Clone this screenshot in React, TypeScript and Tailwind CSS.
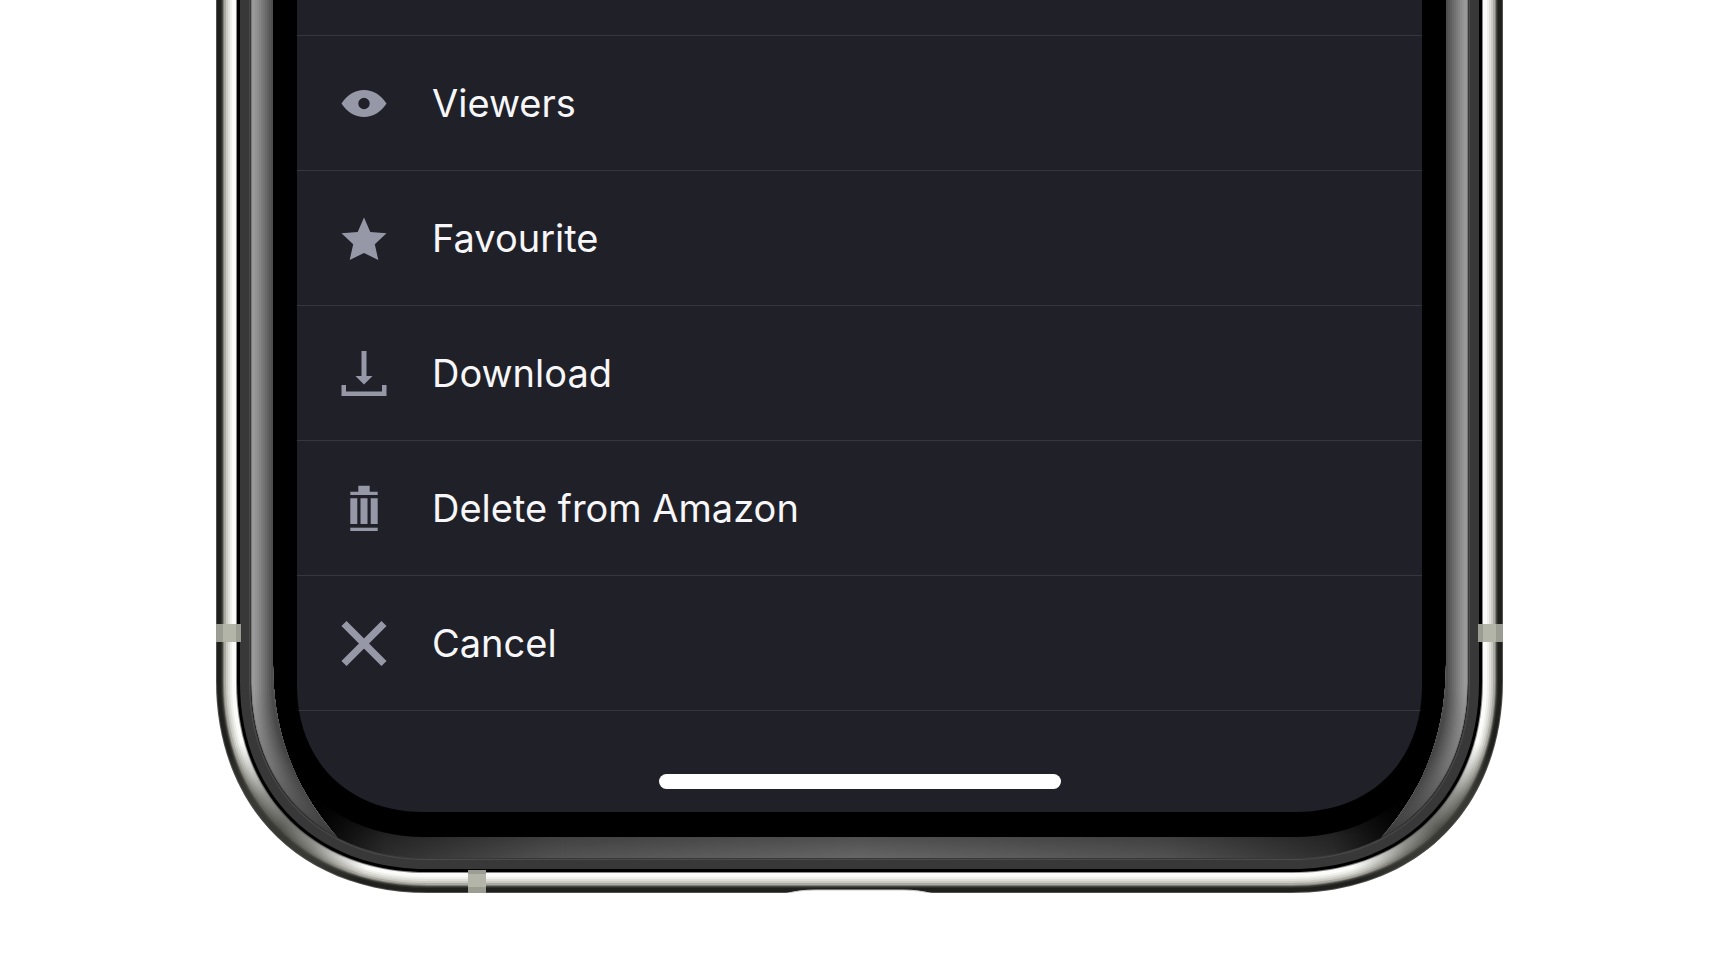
import type { ReactNode } from "react";

type MenuItem = {
    label: string;
    icon: ReactNode;
};

type Band = {
    inset: number;
    color: string;
};

const WIDTH = 1287;
const HEIGHT = 893;

const EyeIcon = () => (
    <svg viewBox="0 0 46 46" className="size-[46px] shrink-0" fill="currentColor" aria-hidden="true">
        <path
            fillRule="evenodd"
            d="M0.500 23.500C6 15 14 10 23 10S40 15 45.500 23.500C40 32 32 37 23 37S6 32 0.500 23.500ZM23 17.800a5.700 5.700 0 1 0 0 11.400a5.700 5.700 0 1 0 0-11.400Z"
        />
    </svg>
);

const StarIcon = () => (
    <svg viewBox="0 0 46 46" className="size-[46px] shrink-0" fill="currentColor" aria-hidden="true">
        <path d="M23 2.500L29.300 17L45.500 18.200L33.800 29.200L37.300 45L23 38L8.700 45L12.200 29.200L0.500 18.200L16.700 17Z" />
    </svg>
);

const DownloadIcon = () => (
    <svg viewBox="0 0 46 46" className="size-[46px] shrink-0" fill="currentColor" aria-hidden="true">
        <path d="M20.500 1h5v25h6L23 34.500L14.500 26h6Z" />
        <path d="M0.500 35h4.500v6.500h36V35h4.500v11h-45Z" />
    </svg>
);

const TrashIcon = () => (
    <svg viewBox="0 0 46 46" className="size-[46px] shrink-0" fill="currentColor" aria-hidden="true">
        <path d="M17.300 0.700h11.400v6h8v3.300H9.300V6.700h8Z" />
        <path d="M9.300 13.300h7V39h-7ZM19.500 13.300h7V39h-7ZM29.700 13.300h7V39h-7Z" />
        <path d="M9.300 42.700h27.400V46H9.300Z" />
    </svg>
);

const CloseIcon = () => (
    <svg viewBox="0 0 46 46" className="size-[46px] shrink-0" fill="none" stroke="currentColor" strokeWidth="7.200" aria-hidden="true">
        <path d="M3 3.500L43 43.500M43 3.500L3 43.500" />
    </svg>
);

const items: MenuItem[] = [
    { label: "Viewers", icon: <EyeIcon /> },
    { label: "Favourite", icon: <StarIcon /> },
    { label: "Download", icon: <DownloadIcon /> },
    { label: "Delete from Amazon", icon: <TrashIcon /> },
    { label: "Cancel", icon: <CloseIcon /> }
];

// U-shaped outline of the case, moved inwards by d
const outline = (d: number) => {
    const l = 212 - d * 1.06;
    const h = l * 0.404;
    const right = WIDTH - d;
    const bottom = HEIGHT - d;
    return `M${d} -1V${bottom - l}C${d} ${bottom - h} ${d + h} ${bottom} ${d + l} ${bottom}H${right - l}C${right - h} ${bottom} ${right} ${bottom - h} ${right} ${bottom - l}V-1Z`;
};

const steel: Band[] = [
    { inset: 0, color: "#50504c" },
    { inset: 1, color: "#20201e" },
    { inset: 5, color: "#30302d" },
    { inset: 6, color: "#484843" },
    { inset: 7, color: "#80807a" },
    { inset: 8, color: "#aaaaa2" },
    { inset: 10, color: "#cbcbc4" },
    { inset: 12, color: "#dfdfda" },
    { inset: 14, color: "#efefec" },
    { inset: 16, color: "#fbfbfa" },
    { inset: 20, color: "#8a8a86" }
];

const sheen: Band[] = [
    { inset: 35, color: "#7a7a7a" },
    { inset: 36, color: "#999999" },
    { inset: 39, color: "#939393" },
    { inset: 41, color: "#8c8c8c" },
    { inset: 43, color: "#848484" },
    { inset: 45, color: "#7b7b7b" },
    { inset: 47, color: "#727272" },
    { inset: 49, color: "#696969" },
    { inset: 51, color: "#606060" },
    { inset: 53, color: "#575757" },
    { inset: 55, color: "#4e4e4e" }
];

const SIDE = "M30 -1V870H100L122 838C100 812 57 760 57 664V-1Z";

const Sheen = () => (
    <g clipPath="url(#inner)">
        <g clipPath="url(#side)">
            {sheen.map(({ inset, color }) => (
                <path key={inset} d={outline(inset)} fill={color} />
            ))}
        </g>
        <path d={SIDE} fill="url(#sheenFade)" />
    </g>
);

const PhoneCase = () => (
    <svg
        viewBox={`0 0 ${WIDTH} ${HEIGHT}`}
        preserveAspectRatio="none"
        className="absolute inset-0 h-full w-full"
        aria-hidden="true"
    >
        <defs>
            <radialGradient id="corner">
                <stop offset="0" stopColor="#3c3c38" stopOpacity="0.8" />
                <stop offset="0.4" stopColor="#484843" stopOpacity="0.6" />
                <stop offset="1" stopColor="#60605a" stopOpacity="0" />
            </radialGradient>
            <linearGradient id="lip" x1="0" x2="1" y1="0" y2="0">
                <stop offset="0.05" stopColor="#000000" />
                <stop offset="0.11" stopColor="#2e2e2e" />
                <stop offset="0.25" stopColor="#545454" />
                <stop offset="0.5" stopColor="#686868" />
                <stop offset="0.75" stopColor="#545454" />
                <stop offset="0.89" stopColor="#2e2e2e" />
                <stop offset="0.95" stopColor="#000000" />
            </linearGradient>
            <linearGradient id="lipShade" gradientUnits="userSpaceOnUse" x1="0" x2="0" y1="800" y2="860">
                <stop offset="0" stopColor="#000000" stopOpacity="0.9" />
                <stop offset="0.6" stopColor="#000000" stopOpacity="0.25" />
                <stop offset="1" stopColor="#000000" stopOpacity="0" />
            </linearGradient>
            <linearGradient id="sheenFade" gradientUnits="userSpaceOnUse" x1="0" x2="0" y1="690" y2="840">
                <stop offset="0" stopColor="#303030" stopOpacity="0" />
                <stop offset="0.5" stopColor="#303030" stopOpacity="0.35" />
                <stop offset="1" stopColor="#303030" stopOpacity="0.95" />
            </linearGradient>
            <clipPath id="case">
                <path d={outline(0)} />
            </clipPath>
            <clipPath id="inner">
                <path d={outline(35)} />
            </clipPath>
            <clipPath id="side">
                <path d={SIDE} />
            </clipPath>
        </defs>
        {steel.map(({ inset, color }) => (
            <path key={inset} d={outline(inset)} fill={color} />
        ))}
        <g clipPath="url(#case)">
            <circle cx="64" cy="829" r="95" fill="url(#corner)" />
            <circle cx={WIDTH - 64} cy="829" r="95" fill="url(#corner)" />
        </g>
        <path d={outline(21)} fill="#000000" />
        <path d={outline(24)} fill="#383838" />
        <path d={outline(33)} fill="#4a4a4a" />
        <path d={outline(34)} fill="#383838" />
        <path d={outline(35)} fill="url(#lip)" />
        <path d={outline(35)} fill="url(#lipShade)" />
        <path d={outline(56)} fill="#000000" />
        <Sheen />
        <g transform={`translate(${WIDTH} 0) scale(-1 1)`}>
            <Sheen />
        </g>
        <path d={outline(81)} fill="#202128" />
        <path d="M0 624h25v18H0Z" fill="#b4b5a9" />
        <path d="M0 624h7v18H0ZM20 624h5v18h-5Z" fill="#9c9d92" />
        <path d={`M${WIDTH - 25} 624h25v18h-25Z`} fill="#b4b5a9" />
        <path d={`M${WIDTH - 25} 624h5v18h-5ZM${WIDTH - 7} 624h7v18h-7Z`} fill="#9c9d92" />
        <path d="M252 870h18v23h-18Z" fill="#b4b5a9" />
        <path d="M252 870h18v4h-18ZM252 887h18v6h-18Z" fill="#9c9d92" />
        <path d="M568 894C580 891 588 890 600 890H686C698 890 706 891 718 894Z" fill="#ffffff" stroke="#c8c8c4" strokeWidth="1" />
    </svg>
);

const App: React.FC = () => {
    return (
        <main className="min-h-screen bg-white font-[Inter,'Liberation_Sans',sans-serif]">
            <div className="relative mx-auto w-full max-w-[1287px] px-[81px] pb-[81px]">
                <PhoneCase />
                <div className="relative overflow-hidden rounded-b-[120px]">
                    <div className="h-9 border-b border-[#36373b]" />
                    <ul>
                        {items.map((item) => (
                            <li key={item.label} className="border-b border-[#36373b]">
                                <button type="button" className="flex h-[134px] w-full items-center gap-[45px] px-11 text-left text-[#9698a8]">
                                    {item.icon}
                                    <span className="text-[38px] leading-[48px] text-[#f7f7fa]">{item.label}</span>
                                </button>
                            </li>
                        ))}
                    </ul>
                    <div className="flex justify-center pt-[63px] pb-[23px]">
                        <div className="h-[15px] w-[402px] rounded-full bg-white" />
                    </div>
                </div>
            </div>
        </main>
    );
};

export default App;
